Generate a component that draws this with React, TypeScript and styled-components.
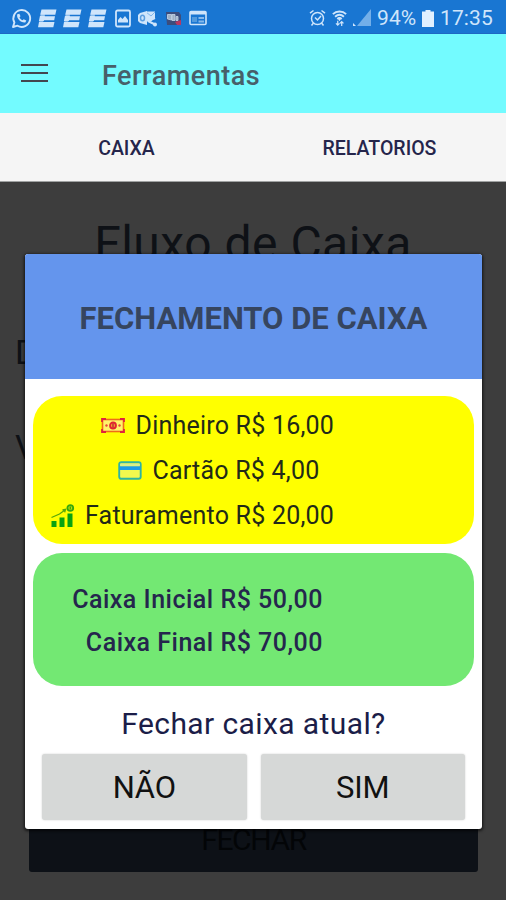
import React from "react";
import styled, { createGlobalStyle } from "styled-components";

const GlobalStyle = createGlobalStyle`
  * { box-sizing: border-box; }
  body { margin: 0; background: #3d3d3d; font-family: Roboto, sans-serif; }
`;

const Screen = styled.div`
  width: 506px;
  height: 900px;
  display: flex;
  flex-direction: column;
  overflow: hidden;
`;

const StatusBar = styled.header`
  height: 34px;
  flex: none;
  display: flex;
  align-items: center;
  justify-content: space-between;
  padding: 3px 12px 0 11px;
  background: #1976d2;
  color: #cfe5fb;
  border-bottom: 1px solid #1c69c4;
`;

const StatusGroup = styled.div<{ $gap: number }>`
  display: flex;
  align-items: center;
  gap: ${(p) => p.$gap}px;
  svg { display: block; flex: none; }
`;

const StatusText = styled.span<{ $spacing: number; $width: number }>`
  width: ${(p) => p.$width}px;
  font-size: 21px;
  line-height: 24px;
  letter-spacing: ${(p) => p.$spacing}px;
  white-space: nowrap;
`;

const AppBar = styled.div`
  height: 79px;
  flex: none;
  display: flex;
  align-items: center;
  gap: 54px;
  padding: 4px 21px 0;
  background: #73fbff;
`;

const MenuButton = styled.button`
  width: 27px;
  height: 18px;
  padding: 0;
  margin-top: -5px;
  border: 0;
  background: none;
  display: flex;
  flex-direction: column;
  justify-content: space-between;
`;

const MenuLine = styled.span`
  height: 2px;
  background: #43464f;
`;

const PageTitle = styled.h1`
  margin: 0;
  font-size: 27px;
  line-height: 32px;
  font-weight: 500;
  letter-spacing: 0.5px;
  color: #47606a;
`;

const Tabs = styled.nav`
  height: 69px;
  flex: none;
  display: grid;
  grid-template-columns: 1fr 1fr;
  background: #f5f5f5;
  border-bottom: 1px solid #a0a2a2;
`;

const Tab = styled.button`
  border: 0;
  padding: 3px 0 0;
  background: none;
  font: 500 19.5px/24px Roboto, sans-serif;
  letter-spacing: 0;
  color: #25254b;
`;

const Content = styled.main`
  position: relative;
  flex: 1;
  display: flex;
  flex-direction: column;
  background: #3d3d3d;
  color: #0e1116;
`;

const ContentTitle = styled.h2`
  margin: 34px 0 0;
  text-align: center;
  font-size: 48px;
  line-height: 56px;
  font-weight: 400;
  letter-spacing: 0.5px;
`;

const Field = styled.div<{ $top: number }>`
  margin-top: ${(p) => p.$top}px;
  padding-left: 15px;
  font-size: 34px;
  line-height: 40px;
`;

const CloseButton = styled.button`
  margin: auto 28px 28px 29px;
  height: 64px;
  border: 0;
  border-radius: 3px;
  background: #0d1117;
  color: #030507;
  font: 400 30px/36px Roboto, sans-serif;
  letter-spacing: -1.4px;
`;

const Overlay = styled.div`
  position: absolute;
  inset: 0;
  display: flex;
  align-items: flex-start;
  justify-content: center;
  padding: 72px 24px 0 25px;
`;

const Dialog = styled.section`
  flex: 1;
  height: 575px;
  display: flex;
  flex-direction: column;
  border-radius: 3px;
  overflow: hidden;
  background: #fff;
  box-shadow: 0 1px 3px 1px rgba(0, 0, 0, 0.65);
`;

const DialogTitle = styled.h3`
  margin: 0;
  height: 125px;
  flex: none;
  display: flex;
  align-items: center;
  justify-content: center;
  padding-top: 4px;
  background: #6495ed;
  color: #36455f;
  font-size: 31px;
  font-weight: 700;
  letter-spacing: 0;
  white-space: nowrap;
`;

const Panel = styled.div<{ $color: string; $top: number; $height: number; $padding: string }>`
  margin: ${(p) => p.$top}px 8px 0;
  height: ${(p) => p.$height}px;
  flex: none;
  padding: ${(p) => p.$padding};
  border-radius: 29px;
  background: ${(p) => p.$color};
`;

const Amount = styled.div<{ $left: number }>`
  height: 45px;
  padding-left: ${(p) => p.$left}px;
  display: flex;
  align-items: center;
  gap: 10.5px;
  font-size: 25px;
  letter-spacing: 0.22px;
  color: #222a18;
  white-space: nowrap;
  svg { display: block; flex: none; }
`;

const Balance = styled.div`
  height: 43px;
  line-height: 43px;
  text-align: right;
  font-size: 25px;
  font-weight: 500;
  letter-spacing: 0.5px;
  color: #25264d;
  white-space: nowrap;
`;

const Question = styled.p`
  margin: 20px 0 0;
  text-align: center;
  font-size: 30px;
  line-height: 36px;
  letter-spacing: 0.4px;
  color: #1b1d48;
`;

const Actions = styled.div`
  margin: 12px 17px 0;
  display: grid;
  grid-template-columns: 1fr 1fr;
  gap: 14px;
`;

const ActionButton = styled.button`
  height: 66px;
  border: 0;
  padding: 2px 0 0;
  border-radius: 3px;
  background: #d6d8d7;
  box-shadow: 0 0 2px rgba(0, 0, 0, 0.2);
  color: #111;
  font: 400 31px/36px Roboto, sans-serif;
  letter-spacing: -0.2px;
`;

const WhatsAppIcon = () => (
  <svg width="21" height="21" viewBox="0 0 21 21" fill="none" stroke="currentColor">
    <path d="M2 19l1.400-4.500A8.400 8.400 0 1 1 6.500 17.700Z" strokeWidth="1.900" strokeLinejoin="round" />
    <path d="M6.200 6.300C5.300 10.500 9.500 15 14.300 14.500L15.300 12.500L12.700 11.200L11.500 12.300C10 11.700 9 10.600 8.500 9.200L9.500 8.200L8.400 5.700Z" fill="currentColor" stroke="none" />
  </svg>
);

const StripeIcon = () => (
  <svg width="19" height="19" viewBox="0 0 19 19" fill="currentColor">
    <path d="M3.500 0.500H18.500L17.300 5.800H2.200Z" />
    <path d="M2 6.800H7L6.800 7.300H17L16.200 11.300H6L5.800 12H0.900Z" />
    <path d="M1 13H16.500L15.300 18.300H0Z" />
    <path d="M3 5h4l-.6 3h-4ZM1.600 11h4l-.6 3h-4Z" opacity="0.550" />
  </svg>
);

const PictureIcon = () => (
  <svg width="16" height="19" viewBox="0 0 16 19" fill="none" stroke="currentColor">
    <rect x="1" y="1.500" width="14" height="16" rx="1.500" strokeWidth="1.800" />
    <path d="M3 13.500V11l2.500-3 2 2 2.500-3 3 4v2.500Z" fill="currentColor" stroke="none" />
  </svg>
);

const OutlookIcon = () => (
  <svg width="20" height="17" viewBox="0 0 20 17" fill="none" stroke="currentColor">
    <path d="M8 1.500h9v6l-4 4H8Z" fill="currentColor" stroke="none" />
    <path d="M8 2l5 4 4-4" stroke="#6ba9e6" strokeWidth="0.800" />
    <path d="M0 5l2-2 7-2v14l-7-2-2-2Z" fill="currentColor" stroke="none" />
    <ellipse cx="4.500" cy="8" rx="2" ry="2.800" stroke="#5c9fe0" strokeWidth="1.500" />
    <path d="M10 11l7-3M10 11l7 3.500" strokeWidth="2" />
    <circle cx="17" cy="14.500" r="2" fill="currentColor" stroke="none" />
  </svg>
);

const RemoteIcon = () => (
  <svg width="16" height="15" viewBox="0 0 16 15">
    <path d="M0 1h13l2 3v10H1Z" fill="#3c4d7c" />
    <path d="M1.500 3.500h4V9l-4-1Zm4.500 0h3v6H6Zm4 2h2v4h-2Z" fill="#9fb0c4" stroke="#c4d7ea" strokeWidth="0.800" />
    <path d="M9 11l6-2v5h-4Z" fill="#b73863" />
  </svg>
);

const NewsIcon = () => (
  <svg width="18" height="16" viewBox="0 0 18 16">
    <rect x="1" y="1.500" width="16" height="13" rx="1" fill="none" stroke="currentColor" strokeWidth="1.600" />
    <path d="M1 3h16" stroke="currentColor" strokeWidth="3" />
    <path d="M3 7h5v5H3Z" fill="#519add" />
    <path d="M9.500 8H15M9.500 11.500H15" stroke="#87b9eb" strokeWidth="2" />
  </svg>
);

const AlarmIcon = () => (
  <svg width="17" height="18" viewBox="0 0 17 18" fill="none" stroke="currentColor" strokeWidth="1.500">
    <circle cx="8.500" cy="9.500" r="6" />
    <path d="M1 4.200L4.500 1.500M16 4.200L12.500 1.500M4.500 14L2.500 16.500M12.500 14l2 2.500M6 8.500l2.500 2.500 3.500-4" />
  </svg>
);

const WifiIcon = () => (
  <svg width="15" height="19" viewBox="0 0 17 19" fill="none" stroke="currentColor">
    <path d="M1 4.500C5 0.700 12 0.700 16 4.500M3.500 7.500c3-2.600 7-2.600 10 0M6 10c1.600-1.300 3.400-1.300 5 0" strokeWidth="2.200" />
    <path d="M7 9h3l-1.500 3Z" fill="currentColor" />
    <path d="M6.500 12v5M4.500 15l2 2 2-2M11 18v-5M9 15l2-2 2 2" strokeWidth="1.400" />
  </svg>
);

const SignalIcon = () => (
  <svg width="18" height="18" viewBox="0 0 18 18">
    <path d="M18 0v17H4Z" fill="#73afe9" />
    <path d="M0 14l3 3H0Z" fill="#cfe5fb" />
  </svg>
);

const BatteryIcon = () => (
  <svg width="12" height="17" viewBox="0 0 12 17" fill="#e1f0ff">
    <path d="M3.500 0h5v1.500H12V17H0V1.500h3.500Z" />
  </svg>
);

const CashIcon = () => (
  <svg width="24" height="15" viewBox="0 0 24 15">
    <rect x="1.500" y="1.500" width="21" height="12" fill="#fff36a" stroke="#ef6b18" strokeWidth="1.600" />
    <path d="M1 4V1h4M19 1h4v3M1 11v3h4M19 14h4v-3" fill="none" stroke="#df233e" strokeWidth="1.800" />
    <circle cx="12" cy="7.500" r="3" fill="#f4a02c" stroke="#e22432" strokeWidth="1.800" />
    <path d="M12 5.500v4" stroke="#a9183a" strokeWidth="1.200" />
    <circle cx="5.500" cy="7.500" r="1.200" fill="#e8453a" />
    <circle cx="18.500" cy="7.500" r="1.200" fill="#e8453a" />
  </svg>
);

const CardIcon = () => (
  <svg width="24" height="20" viewBox="0 0 24 20">
    <rect x="1.200" y="1.200" width="21.500" height="16.600" rx="2" fill="#f2f94e" stroke="#2fb5a0" strokeWidth="1.900" />
    <path d="M2 3.700h20" stroke="#d5ee94" strokeWidth="2" />
    <path d="M1.500 7.200h21" stroke="#1c9be8" strokeWidth="3.800" />
  </svg>
);

const ChartIcon = () => (
  <svg width="24" height="24" viewBox="0 0 24 24">
    <path d="M0.500 17h5v6h-5ZM8.500 13.500h5V23h-5ZM16.500 9.500h5V23h-5Z" fill="#0aa310" />
    <path d="M0.500 13.500L8.500 10l5.500-4M11.500 6l3-.7-.8 3" fill="none" stroke="#57a809" strokeWidth="1.300" />
    <circle cx="19.300" cy="4" r="2.900" fill="#b6dc08" stroke="#36a80c" strokeWidth="1.800" />
    <path d="M19.300 2.500v3" stroke="#36a80c" strokeWidth="1.200" />
  </svg>
);

export default function App() {
  return (
    <Screen>
      <GlobalStyle />
      <StatusBar>
        <StatusGroup $gap={7.5}>
          <StatusGroup $gap={6}>
            <WhatsAppIcon />
            <StripeIcon />
            <StripeIcon />
            <StripeIcon />
          </StatusGroup>
          <PictureIcon />
          <OutlookIcon />
          <RemoteIcon />
          <NewsIcon />
        </StatusGroup>
        <StatusGroup $gap={6}>
          <AlarmIcon />
          <WifiIcon />
          <SignalIcon />
          <StatusText $spacing={0.1} $width={39}>94%</StatusText>
          <BatteryIcon />
          <StatusText $spacing={0.1} $width={54}>17:35</StatusText>
        </StatusGroup>
      </StatusBar>
      <AppBar>
        <MenuButton aria-label="Menu">
          <MenuLine />
          <MenuLine />
          <MenuLine />
        </MenuButton>
        <PageTitle>Ferramentas</PageTitle>
      </AppBar>
      <Tabs>
        <Tab>CAIXA</Tab>
        <Tab>RELATORIOS</Tab>
      </Tabs>
      <Content>
        <ContentTitle>Fluxo de Caixa</ContentTitle>
        <Field $top={60}>D</Field>
        <Field $top={55}>V</Field>
        <CloseButton>FECHAR</CloseButton>
        <Overlay>
          <Dialog role="dialog">
            <DialogTitle>FECHAMENTO DE CAIXA</DialogTitle>
            <Panel $color="#ffff00" $top={17} $height={148} $padding="7px 0 0">
              <Amount $left={68}><CashIcon />Dinheiro R$ 16,00</Amount>
              <Amount $left={85}><CardIcon />Cartão R$ 4,00</Amount>
              <Amount $left={17.5}><ChartIcon />Faturamento R$ 20,00</Amount>
            </Panel>
            <Panel $color="#73e873" $top={9} $height={133} $padding="25px 151px 0 0">
              <Balance>Caixa Inicial R$ 50,00</Balance>
              <Balance>Caixa Final R$ 70,00</Balance>
            </Panel>
            <Question>Fechar caixa atual?</Question>
            <Actions>
              <ActionButton>NÃO</ActionButton>
              <ActionButton>SIM</ActionButton>
            </Actions>
          </Dialog>
        </Overlay>
      </Content>
    </Screen>
  );
}
